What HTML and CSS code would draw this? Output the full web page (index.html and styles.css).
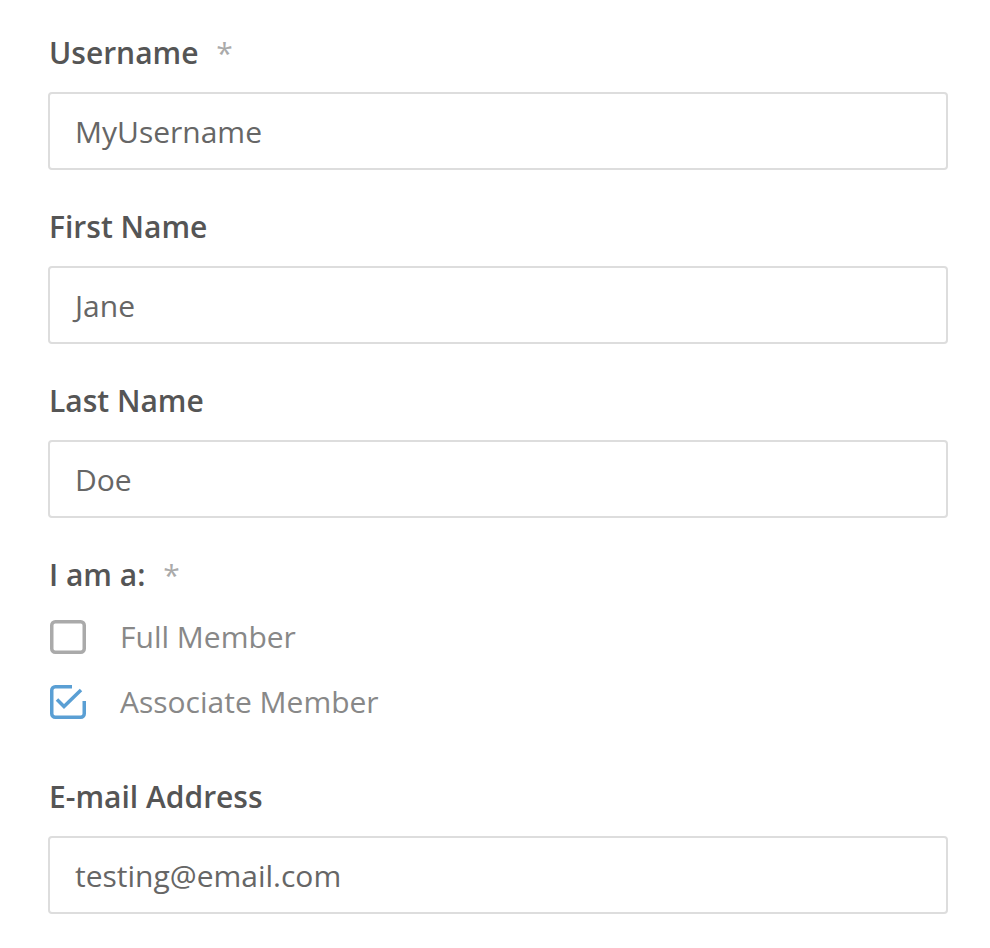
FILE: index.html
```html
<!DOCTYPE html>
<html>
<head>
<meta charset="utf-8">
<link rel="stylesheet" href="styles.css">
</head>
<body>
<form class="form">
  <div class="field">
    <label class="label">Username <span class="req">*</span></label>
    <div class="input">MyUsername</div>
  </div>
  <div class="field">
    <label class="label">First Name</label>
    <div class="input">Jane</div>
  </div>
  <div class="field">
    <label class="label">Last Name</label>
    <div class="input">Doe</div>
  </div>
  <div class="field group">
    <label class="label">I am a: <span class="req">*</span></label>
    <div class="option">
      <svg class="box" width="40" height="38" viewBox="0 0 40 38"><rect x="3.75" y="3.75" width="32.5" height="30.5" rx="3.5" fill="none" stroke="#aaaaaa" stroke-width="3.5"/></svg>
      <span class="opt-text">Full Member</span>
    </div>
    <div class="option">
      <svg class="box" width="40" height="38" viewBox="0 0 40 38"><path d="M24 3.75 H7.25 a3.5 3.5 0 0 0 -3.5 3.5 V30.75 a3.5 3.5 0 0 0 3.5 3.5 H32.75 a3.5 3.5 0 0 0 3.5 -3.5 V18" fill="none" stroke="#5a9fd4" stroke-width="3.5"/><path d="M9 16.5 L16 23.5 L33 7" fill="none" stroke="#5a9fd4" stroke-width="3.5"/></svg>
      <span class="opt-text">Associate Member</span>
    </div>
  </div>
  <div class="field">
    <label class="label">E-mail Address</label>
    <div class="input">testing@email.com</div>
  </div>
</form>
</body>
</html>
```
FILE: styles.css
```css
html, body {
  margin: 0;
  padding: 0;
  background: #ffffff;
}
body {
  font-family: "Open Sans", "Liberation Sans", sans-serif;
}
.form {
  padding: 34px 42px 0 48px;
  display: flex;
  flex-direction: column;
  gap: 38px;
}
.field {
  display: flex;
  flex-direction: column;
}
.label {
  display: block;
  font-size: 30px;
  line-height: 38px;
  font-weight: 600;
  color: #555555;
  margin-left: 1px;
  margin-bottom: 20px;
}
.req {
  color: #aaaaaa;
  font-weight: 400;
  margin-left: 10px;
}
.input {
  height: 74px;
  border: 2px solid #dddddd;
  border-radius: 4px;
  box-sizing: content-box;
  padding: 0 25px;
  display: flex;
  align-items: center;
  font-size: 30px;
  color: #666666;
}
.group .label {
  margin-bottom: 10px;
}
.group {
  padding-bottom: 6px;
}
.option {
  display: flex;
  align-items: center;
  height: 65px;
}
.box {
  flex: none;
  margin-left: 0;
}
.opt-text {
  margin-left: 32px;
  font-size: 30px;
  color: #888888;
}
```
